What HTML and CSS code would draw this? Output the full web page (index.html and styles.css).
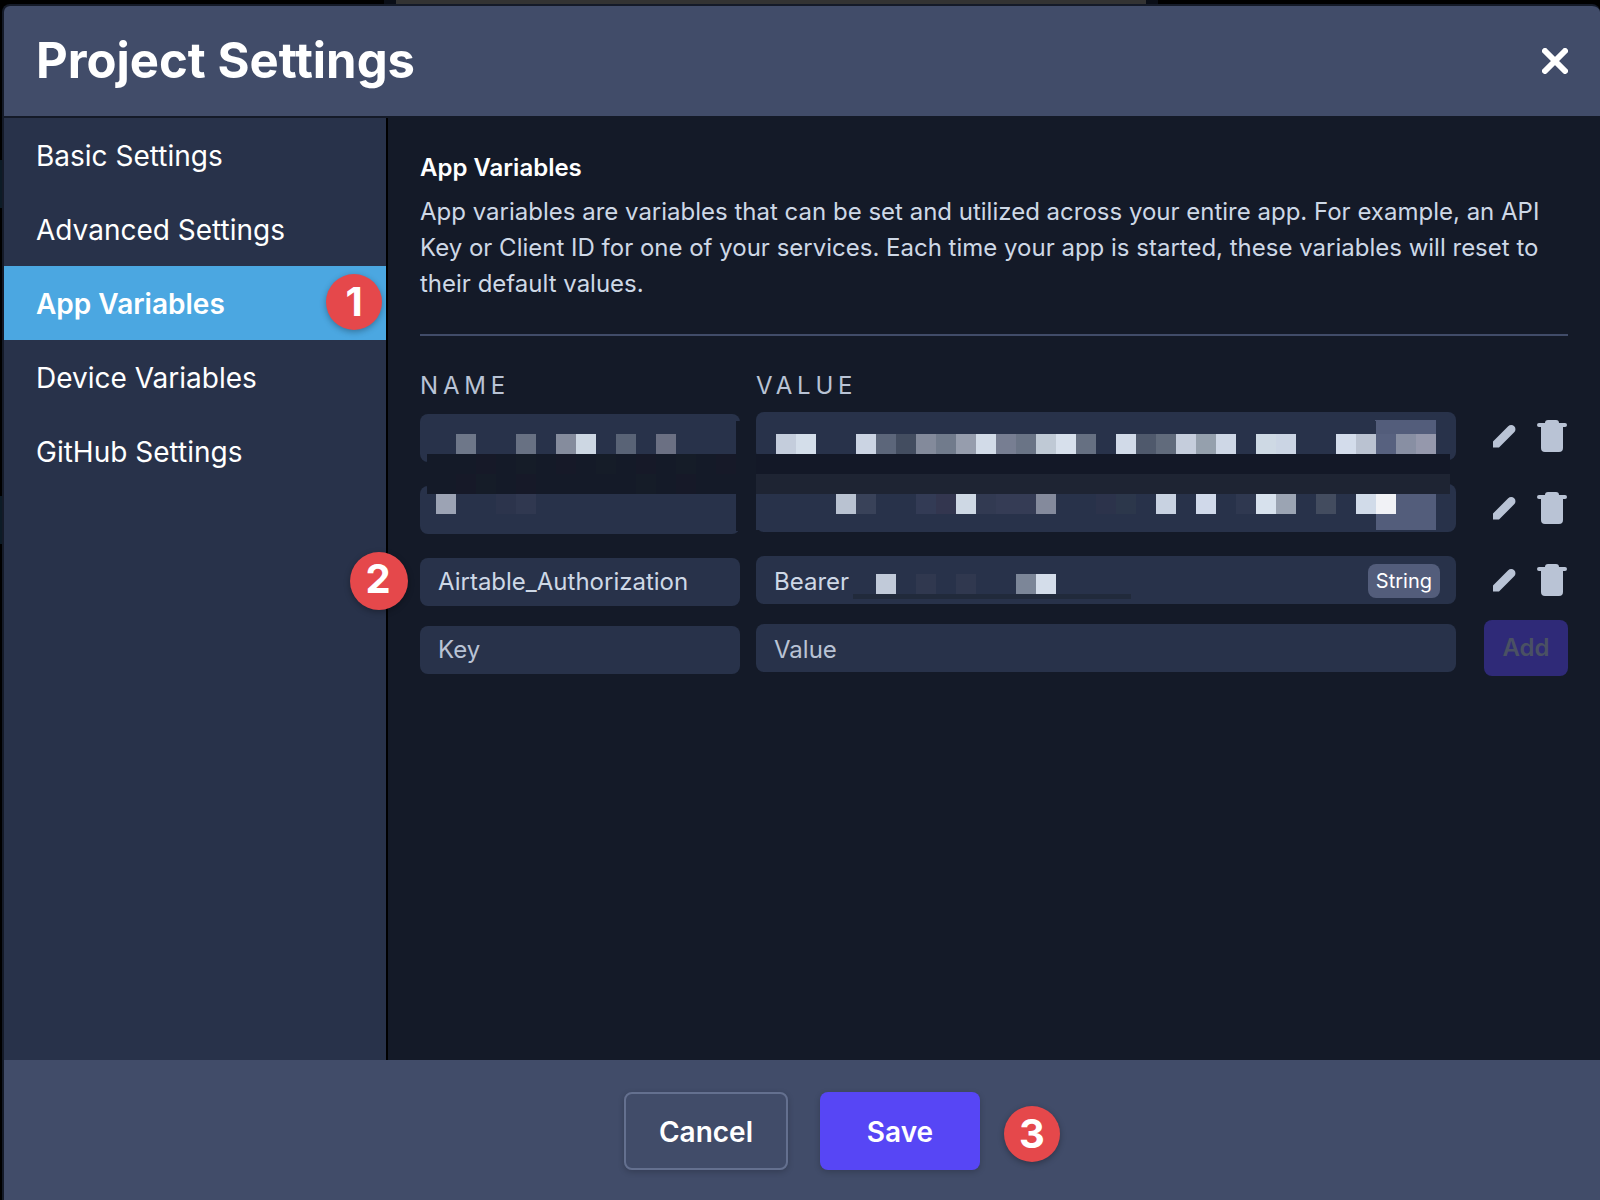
FILE: index.html
```html
<!DOCTYPE html>
<html lang="en">
<head>
    <meta charset="UTF-8">
    <meta name="viewport" content="width=device-width, initial-scale=1.0">
    <title>Project Settings</title>
    <link rel="stylesheet" href="styles.css">
</head>
<body>
    <!-- Shared icons -->
    <svg class="icon-sprite" aria-hidden="true">
        <symbol id="icon-pencil" viewBox="0 0 24 24">
            <path d="M1 17.5 16.2 2.3a4.2 4.2 0 0 1 6 0 4.2 4.2 0 0 1 0 6L7 23.5H1z"/>
        </symbol>
        <symbol id="icon-trash" viewBox="0 0 30 32">
            <path d="M8 3a3 3 0 0 1 3-3h8a3 3 0 0 1 3 3h6a2 2 0 0 1 0 4h-2v21a4 4 0 0 1-4 4H8a4 4 0 0 1-4-4V7H2a2 2 0 0 1 0-4z"/>
        </symbol>
    </svg>

    <div class="modal">
        <header class="modal-header">
            <h1>Project Settings</h1>
            <button class="close-btn" type="button" aria-label="Close">
                <svg viewBox="0 0 26 26"><path d="M3 3l20 20M23 3L3 23"/></svg>
            </button>
        </header>

        <div class="modal-body">
            <nav class="sidebar">
                <a href="#basic">Basic Settings</a>
                <a href="#advanced">Advanced Settings</a>
                <a href="#app-variables" class="active">App Variables <span class="step step-1">1</span></a>
                <a href="#device-variables">Device Variables</a>
                <a href="#github">GitHub Settings</a>
            </nav>

            <main class="content">
                <h2>App Variables</h2>
                <p class="description">App variables are variables that can be set and utilized across your entire app. For example, an API Key or Client ID for one of your services. Each time your app is started, these variables will reset to their default values.</p>

                <table class="variables">
                    <thead>
                        <tr>
                            <th class="col-name">Name</th>
                            <th class="col-value">Value</th>
                            <th class="col-actions"></th>
                        </tr>
                    </thead>
                    <tbody>
                        <tr>
                            <td class="col-name">
                                <div class="field"><input type="text" aria-label="Variable name" readonly></div>
                                <!-- Redacted names, covers the first two rows -->
                                <svg class="mosaic mosaic-name" width="336" height="120" aria-hidden="true">
                                    <path fill="#141a28" d="M7 40h309V7h20v110h-20V80H7z"/>
                                    <path fill="#161928" d="M56 40h20v20H56zM136 40h20v20h-20zM216 40h20v20h-20zM296 40h20v20h-20zM36 60h20v20H36zM96 60h20v20H96zM256 60h20v20h-20z"/>
                                    <path fill="#151c28" d="M96 40h20v20H96zM176 40h20v20h-20zM256 40h20v20h-20zM56 60h20v20H56zM216 60h20v20h-20z"/>
                                    <rect x="36" y="20" width="20" height="20" fill="#6e7789"/>
                                    <rect x="96" y="20" width="20" height="20" fill="#687183"/>
                                    <rect x="136" y="20" width="20" height="20" fill="#858c9d"/>
                                    <rect x="156" y="20" width="20" height="20" fill="#cdd7e3"/>
                                    <rect x="196" y="20" width="20" height="20" fill="#596376"/>
                                    <rect x="236" y="20" width="20" height="20" fill="#6b7083"/>
                                    <rect x="16" y="80" width="20" height="20" fill="#9ca3b4"/>
                                    <rect x="76" y="80" width="20" height="20" fill="#2c344c"/>
                                    <rect x="96" y="80" width="20" height="20" fill="#303850"/>
                                </svg>
                            </td>
                            <td class="col-value">
                                <div class="field"><input type="text" aria-label="Variable value" readonly></div>
                                <!-- Redacted values, covers the first two rows -->
                                <svg class="mosaic" width="700" height="120" aria-hidden="true">
                                    <rect x="0" y="42" width="694" height="20" fill="#131827"/>
                                    <rect x="0" y="62" width="694" height="20" fill="#1e2433"/>
                                    <rect x="0" y="82" width="8" height="36" fill="#28324a"/>
                                    <path fill="#535d7b" d="M618 8h60a2 2 0 0 1 2 2v32h-60V9zM620 82h60v36h-60z"/>
                                    <rect x="20" y="22" width="20" height="20" fill="#c4cddc"/>
                                    <rect x="40" y="22" width="20" height="20" fill="#d4deea"/>
                                    <rect x="100" y="22" width="20" height="20" fill="#cbd4e3"/>
                                    <rect x="120" y="22" width="20" height="20" fill="#5c667a"/>
                                    <rect x="140" y="22" width="20" height="20" fill="#434d60"/>
                                    <rect x="160" y="22" width="20" height="20" fill="#838a9b"/>
                                    <rect x="180" y="22" width="20" height="20" fill="#717b8c"/>
                                    <rect x="200" y="22" width="20" height="20" fill="#969dad"/>
                                    <rect x="220" y="22" width="20" height="20" fill="#d2dbe8"/>
                                    <rect x="240" y="22" width="20" height="20" fill="#777e92"/>
                                    <rect x="260" y="22" width="20" height="20" fill="#6a7486"/>
                                    <rect x="280" y="22" width="20" height="20" fill="#bfc9d5"/>
                                    <rect x="300" y="22" width="20" height="20" fill="#d7e0ec"/>
                                    <rect x="320" y="22" width="20" height="20" fill="#667082"/>
                                    <rect x="360" y="22" width="20" height="20" fill="#d1dae8"/>
                                    <rect x="380" y="22" width="20" height="20" fill="#4f596c"/>
                                    <rect x="400" y="22" width="20" height="20" fill="#616b7c"/>
                                    <rect x="420" y="22" width="20" height="20" fill="#c5cddc"/>
                                    <rect x="440" y="22" width="20" height="20" fill="#95a0ad"/>
                                    <rect x="460" y="22" width="20" height="20" fill="#ced7e6"/>
                                    <rect x="500" y="22" width="20" height="20" fill="#ced9e4"/>
                                    <rect x="520" y="22" width="20" height="20" fill="#cbd5e4"/>
                                    <rect x="580" y="22" width="20" height="20" fill="#d3dceb"/>
                                    <rect x="600" y="22" width="20" height="20" fill="#bac2d1"/>
                                    <rect x="620" y="22" width="20" height="20" fill="#57617f"/>
                                    <rect x="640" y="22" width="20" height="20" fill="#888fa3"/>
                                    <rect x="660" y="22" width="20" height="20" fill="#9598ac"/>
                                    <rect x="80" y="82" width="20" height="20" fill="#b9c2d1"/>
                                    <rect x="100" y="82" width="20" height="20" fill="#394259"/>
                                    <rect x="160" y="82" width="20" height="20" fill="#333b55"/>
                                    <rect x="180" y="82" width="20" height="20" fill="#33364f"/>
                                    <rect x="200" y="82" width="20" height="20" fill="#ced8e4"/>
                                    <rect x="220" y="82" width="20" height="20" fill="#323a52"/>
                                    <rect x="240" y="82" width="40" height="20" fill="#353c55"/>
                                    <rect x="280" y="82" width="20" height="20" fill="#848a9c"/>
                                    <rect x="340" y="82" width="20" height="20" fill="#2c334b"/>
                                    <rect x="360" y="82" width="20" height="20" fill="#2c374b"/>
                                    <rect x="400" y="82" width="20" height="20" fill="#c8d2e1"/>
                                    <rect x="440" y="82" width="20" height="20" fill="#d0d9ea"/>
                                    <rect x="480" y="82" width="20" height="20" fill="#2f3850"/>
                                    <rect x="500" y="82" width="20" height="20" fill="#d7e1ed"/>
                                    <rect x="520" y="82" width="20" height="20" fill="#9ba4b3"/>
                                    <rect x="560" y="82" width="20" height="20" fill="#434c5f"/>
                                    <rect x="600" y="82" width="20" height="20" fill="#d1dbe9"/>
                                    <rect x="620" y="82" width="20" height="20" fill="#f1f2f6"/>
                                </svg>
                            </td>
                            <td class="col-actions">
                                <div class="actions">
                                    <button type="button" aria-label="Edit"><svg class="icon-pencil"><use href="#icon-pencil"/></svg></button>
                                    <button type="button" aria-label="Delete"><svg class="icon-trash"><use href="#icon-trash"/></svg></button>
                                </div>
                            </td>
                        </tr>
                        <tr>
                            <td class="col-name">
                                <div class="field"><input type="text" aria-label="Variable name" readonly></div>
                            </td>
                            <td class="col-value">
                                <div class="field"><input type="text" aria-label="Variable value" readonly></div>
                            </td>
                            <td class="col-actions">
                                <div class="actions">
                                    <button type="button" aria-label="Edit"><svg class="icon-pencil"><use href="#icon-pencil"/></svg></button>
                                    <button type="button" aria-label="Delete"><svg class="icon-trash"><use href="#icon-trash"/></svg></button>
                                </div>
                            </td>
                        </tr>
                        <tr class="last-row">
                            <td class="col-name">
                                <span class="step step-2">2</span>
                                <div class="field"><input type="text" aria-label="Variable name" value="Airtable_Authorization" readonly></div>
                            </td>
                            <td class="col-value">
                                <div class="field">
                                    <input type="text" aria-label="Variable value" value="Bearer" readonly>
                                    <span class="type-tag">String</span>
                                </div>
                                <svg class="mosaic" width="400" height="48" aria-hidden="true">
                                    <rect x="97" y="38" width="278" height="5" fill="#212a3b"/>
                                    <rect x="120" y="18" width="20" height="20" fill="#c1cad9"/>
                                    <rect x="160" y="18" width="20" height="20" fill="#30384f"/>
                                    <rect x="200" y="18" width="20" height="20" fill="#30384f"/>
                                    <rect x="260" y="18" width="20" height="20" fill="#7c8698"/>
                                    <rect x="280" y="18" width="20" height="20" fill="#d4ddea"/>
                                </svg>
                            </td>
                            <td class="col-actions">
                                <div class="actions">
                                    <button type="button" aria-label="Edit"><svg class="icon-pencil"><use href="#icon-pencil"/></svg></button>
                                    <button type="button" aria-label="Delete"><svg class="icon-trash"><use href="#icon-trash"/></svg></button>
                                </div>
                            </td>
                        </tr>
                    </tbody>
                    <tfoot>
                        <tr>
                            <td class="col-name">
                                <div class="field"><input type="text" aria-label="New variable key" placeholder="Key"></div>
                            </td>
                            <td class="col-value">
                                <div class="field"><input type="text" aria-label="New variable value" placeholder="Value"></div>
                            </td>
                            <td class="col-actions"><button class="add-btn" type="button" disabled>Add</button></td>
                        </tr>
                    </tfoot>
                </table>
            </main>
        </div>

        <footer class="modal-footer">
            <button class="btn btn-cancel" type="button">Cancel</button>
            <button class="btn btn-save" type="button">Save <span class="step step-3">3</span></button>
        </footer>
    </div>
</body>
</html>
```
FILE: styles.css
```css
* {
    box-sizing: border-box;
}

/* The dimmed page shows as thin strips along the top and left edges */
body {
    margin: 0;
    min-height: 100vh;
    padding: 4px 0 0 2px;
    display: flex;
    background-color: #000;
    background-image:
        linear-gradient(#333, #333),
        linear-gradient(#0a0e17, #0a0e17),
        linear-gradient(#0d1b26, #0d1b26),
        linear-gradient(#0d1b26, #0d1b26);
    background-size: 750px 4px, 774px 4px, 2px 48px, 2px 48px;
    background-position: 396px 0, 384px 0, 0 160px, 0 496px;
    background-repeat: no-repeat;
    color: #fff;
    font-family: Inter, "Liberation Sans", sans-serif;
    font-size: 24px;
}

h1,
h2,
p {
    margin: 0;
}

button,
input {
    font: inherit;
    color: inherit;
}

button {
    padding: 0;
    border: none;
    background: none;
    cursor: pointer;
}

.icon-sprite {
    position: absolute;
    width: 0;
    height: 0;
}

/* Modal */
.modal {
    flex: 1;
    display: flex;
    flex-direction: column;
    border: 2px solid #141a28;
    border-right: none;
    border-bottom: none;
    border-radius: 8px 8px 0 0;
    background-color: #141a28;
    overflow: hidden;
}

.modal-header {
    display: flex;
    align-items: center;
    justify-content: space-between;
    height: 112px;
    padding: 0 32px;
    background-color: #414c69;
    border-bottom: 2px solid #141a28;
}

.modal-header h1 {
    font-size: 49px;
    font-weight: 700;
    line-height: 72px;
}

.close-btn {
    display: flex;
}

.close-btn svg {
    width: 26px;
    height: 26px;
    fill: none;
    stroke: #fff;
    stroke-width: 6;
    stroke-linecap: round;
}

.modal-body {
    flex: 1;
    display: flex;
}

/* Sidebar */
.sidebar {
    flex: 0 0 384px;
    background-color: #28324a;
    border-right: 2px solid #000;
}

.sidebar a {
    position: relative;
    display: block;
    padding: 17px 32px 15px;
    font-size: 28px;
    line-height: 42px;
    color: #fff;
    text-decoration: none;
}

.sidebar a.active {
    background-color: #4ba7e1;
    font-weight: 600;
}

/* Numbered markers */
.step {
    position: absolute;
    display: flex;
    align-items: center;
    justify-content: center;
    width: 56px;
    height: 56px;
    border-radius: 50%;
    background-color: #e5484b;
    box-shadow: 0 2px 6px rgba(0, 0, 0, 0.3);
    color: #fff;
    font-size: 40px;
    font-weight: 700;
    line-height: 56px;
}

.step-1 {
    top: 8px;
    right: 4px;
}

.step-2 {
    top: -4px;
    left: -70px;
    width: 58px;
    height: 58px;
    padding: 0 2px 4px 0;
}

.step-3 {
    top: 14px;
    left: calc(100% + 24px);
}

/* Content */
.content {
    flex: 1;
    min-width: 0;
    padding: 32px;
}

.content h2 {
    font-size: 24px;
    font-weight: 600;
    line-height: 36px;
}

.description {
    margin-top: 8px;
    padding-bottom: 32px;
    border-bottom: 2px solid #414c69;
    color: #ced8e6;
    line-height: 36px;
}

/* Variables table */
.variables {
    width: 100%;
    margin-top: 32px;
    border-collapse: collapse;
    table-layout: fixed;
}

.variables th {
    height: 44px;
    padding: 0;
    color: #b9c3d5;
    font-weight: 400;
    line-height: 36px;
    letter-spacing: 0.2em;
    text-align: left;
    text-transform: uppercase;
    vertical-align: top;
}

.variables td {
    position: relative;
    height: 72px;
    padding: 0;
    vertical-align: top;
}

.variables .last-row td {
    height: 64px;
}

.variables tfoot td {
    height: 56px;
    padding-top: 4px;
}

.variables .col-name {
    width: 336px;
    padding-right: 16px;
}

.variables .col-actions {
    width: 112px;
    padding-left: 28px;
}

.variables tfoot .col-actions {
    padding-top: 0;
}

.field {
    display: flex;
    align-items: center;
    height: 48px;
    padding: 2px 16px 0 18px;
    border-radius: 8px;
    background-color: #28324a;
}

.col-name .field {
    margin-top: 2px;
    padding-top: 0;
    padding-bottom: 2px;
}

.field input {
    flex: 1;
    min-width: 0;
    padding: 0;
    border: none;
    outline: none;
    background: none;
    color: #ced8e6;
}

.field input::placeholder {
    color: #b9c3d5;
    opacity: 1;
}

.type-tag {
    padding: 0 8px;
    border-radius: 8px;
    background-color: #535d7b;
    font-size: 20px;
    line-height: 34px;
}

.mosaic {
    position: absolute;
    top: 0;
    left: 0;
    z-index: 1;
    shape-rendering: crispEdges;
    pointer-events: none;
}

.mosaic-name {
    top: 2px;
}

.actions {
    display: flex;
    align-items: center;
    justify-content: space-between;
    height: 48px;
    padding: 0 1px 0 8px;
}

.actions button {
    display: flex;
}

.actions svg {
    fill: #b9c3d5;
}

.icon-pencil {
    width: 24px;
    height: 24px;
}

.icon-trash {
    width: 30px;
    height: 32px;
}

.add-btn {
    width: 84px;
    height: 56px;
    padding-bottom: 2px;
    border-radius: 8px;
    background-color: #2f2a78;
    color: #4a5163;
    font-weight: 600;
    cursor: default;
}

/* Footer */
.modal-footer {
    display: flex;
    justify-content: center;
    gap: 32px;
    height: 140px;
    padding-top: 32px;
    background-color: #414c69;
}

.btn {
    position: relative;
    height: 78px;
    padding-top: 2px;
    border-radius: 8px;
    box-shadow: 0 2px 6px rgba(0, 0, 0, 0.2);
    font-size: 28px;
    font-weight: 600;
}

.btn-cancel {
    width: 164px;
    border: 2px solid #64708f;
}

.btn-save {
    width: 160px;
    background-color: #5746f5;
}
```
